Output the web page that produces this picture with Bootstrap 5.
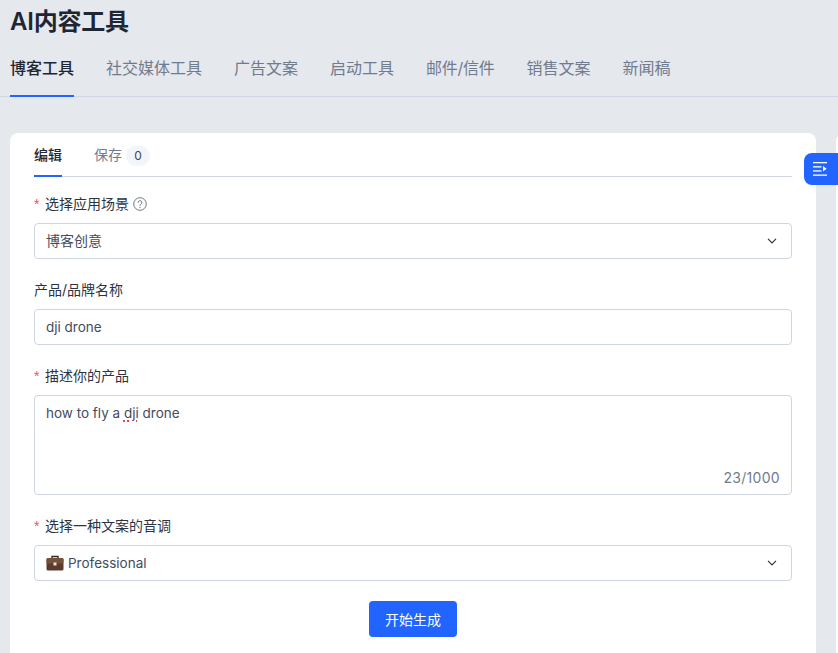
<!DOCTYPE html>
<html lang="zh-CN">
<head>
    <meta charset="UTF-8">
    <title>AI内容工具</title>
    <meta name="viewport" content="width=device-width, initial-scale=1">
    <link href="https://cdn.jsdelivr.net/npm/bootstrap@5.3.2/dist/css/bootstrap.min.css" rel="stylesheet">
    <style>
        html, body { height: 653px; overflow: hidden; }
        body {
            background: #e5e8ed;
            font-family: Inter, "Noto Sans CJK SC", sans-serif;
            color: #1f2633;
            position: relative;
        }
        .page-wrap { padding: 0 0 0 10px; width: 838px; }
        .page-title { font-size: 24px; font-weight: 600; line-height: 32px; margin: 6px 0 0; color: #1f2633; letter-spacing: -.2px; }
        .top-tabs { margin: 15px 0 0 -10px; padding-left: 10px; border-bottom: 1px solid #cfd5e3; gap: 32px; height: 44px; }
        .top-tabs .tab-item { font-size: 16px; line-height: 24px; padding: 3px 0 0; color: #717b8e; height: 44px; border-bottom: 2px solid transparent; }
        .top-tabs .tab-item.on { color: #1f2633; font-weight: 500; border-bottom-color: #2164ff; }
        .top-tabs .tab-slash { letter-spacing: -.25px; }
        .main-row { margin-top: 36px; gap: 20px; }
        .main-card { width: 806px; height: 520px; flex: none; background: #fff; border-radius: 8px 8px 0 0; padding: 8px 24px 0; }
        .side-card { width: 40px; height: 520px; flex: none; background: #fff; border-radius: 8px 0 0 0; }
        .inner-tabs { gap: 32px; border-bottom: 1px solid #cfd5e3; height: 36px; }
        .inner-tabs .tab-item { font-size: 14px; line-height: 22px; padding-top: 3px; height: 36px; color: #717b8e; border-bottom: 2px solid transparent; }
        .inner-tabs .tab-item.on { color: #1f2633; font-weight: 500; border-bottom-color: #2164ff; }
        .count-pill { background: #f2f5f9; color: #3d4656; border-radius: 10px; font-size: 12px; line-height: 20px; width: 24px; text-align: center; margin-left: 4px; display: inline-block; }
        .field-label { font-size: 14px; line-height: 22px; color: #2c3442; margin: 0 0 8px; display: flex; align-items: center; }
        .req { color: #f5505a; margin-right: 5px; width: 6px; font-family: "Liberation Sans", sans-serif; }
        .field { margin-bottom: 20px; }
        .field-box { height: 36px; border: 1px solid #cfd5e3; border-radius: 4px; padding: 0 11px; font-size: 13.5px; color: #434c5c; }
        .area-box { height: 100px; padding-top: 6px; line-height: 22px; position: relative; }
        .area-count { position: absolute; right: 11px; bottom: 5px; font-size: 14px; line-height: 22px; color: #717b8e; letter-spacing: .3px; }
        .typo { text-decoration: underline dotted #f0414b 2px; text-underline-offset: 2px; }
        .cn-val { font-size: 14px; padding-bottom: 2px; }
        .caret-icon { margin-right: 3px; }
        .go-btn { background: #2164ff; border: 0; border-radius: 4px; color: #fff; font-size: 14px; height: 36px; width: 88px; padding: 0; }
        .float-tab { position: absolute; left: 804px; top: 153px; width: 34px; height: 32px; background: #2164ff; border-radius: 8px 0 0 8px; padding-right: 2px; }
    </style>
</head>
<body>
    <div class="page-wrap">
        <h1 class="page-title">AI内容工具</h1>
        <div class="d-flex top-tabs">
            <div class="tab-item on">博客工具</div>
            <div class="tab-item">社交媒体工具</div>
            <div class="tab-item">广告文案</div>
            <div class="tab-item">启动工具</div>
            <div class="tab-item tab-slash">邮件/信件</div>
            <div class="tab-item">销售文案</div>
            <div class="tab-item">新闻稿</div>
        </div>

        <div class="d-flex main-row">
            <div class="main-card">
                <div class="d-flex inner-tabs mb-3">
                    <div class="tab-item on">编辑</div>
                    <div class="tab-item">保存<span class="count-pill">0</span></div>
                </div>

                <div class="field">
                    <div class="field-label"><span class="req">*</span>选择应用场景
                        <svg class="ms-1" width="14" height="14" viewBox="0 0 14 14" fill="none" stroke="#6f7786">
                            <circle cx="7" cy="7" r="6.3"/>
                            <path d="M5.1 5.500a1.900 1.900 0 1 1 2.800 1.700c-.6.3-.9.7-.9 1.300" stroke-linecap="round"/>
                            <circle cx="7" cy="10.400" r=".6" fill="#6f7786" stroke="none"/>
                        </svg>
                    </div>
                    <div class="field-box d-flex align-items-center justify-content-between">
                        <span class="cn-val">博客创意</span>
                        <svg class="caret-icon" width="10" height="6" viewBox="0 0 10 6" fill="none" stroke="#2c3442" stroke-width="1.200"><path d="M1 .8 5 4.800 9 .8"/></svg>
                    </div>
                </div>

                <div class="field">
                    <div class="field-label">产品/品牌名称</div>
                    <div class="field-box d-flex align-items-center">dji drone</div>
                </div>

                <div class="field">
                    <div class="field-label"><span class="req">*</span>描述你的产品</div>
                    <div class="field-box area-box">how to fly a <span class="typo">dji</span> drone
                        <span class="area-count">23/1000</span>
                    </div>
                </div>

                <div class="field">
                    <div class="field-label"><span class="req">*</span>选择一种文案的音调</div>
                    <div class="field-box d-flex align-items-center justify-content-between">
                        <span class="d-flex align-items-center">
                            <svg class="me-1" width="18" height="16" viewBox="0 0 18 16">
                                <path d="M6 3V1.500h6V3" fill="none" stroke="#3c2a22" stroke-width="1.400"/>
                                <rect x="0.5" y="3" width="17" height="12.500" rx="1.500" fill="#5a3c2e"/>
                                <rect x="0.5" y="3" width="17" height="5.500" rx="1.500" fill="#75513c"/>
                                <rect x="7.500" y="7.500" width="3" height="3" fill="#e9e4df"/>
                            </svg>
                            Professional
                        </span>
                        <svg class="caret-icon" width="10" height="6" viewBox="0 0 10 6" fill="none" stroke="#2c3442" stroke-width="1.200"><path d="M1 .8 5 4.800 9 .8"/></svg>
                    </div>
                </div>

                <div class="text-center">
                    <button type="button" class="btn go-btn">开始生成</button>
                </div>
            </div>
            <div class="side-card"></div>
        </div>
    </div>

    <div class="float-tab d-flex align-items-center justify-content-center">
        <svg width="14" height="14" viewBox="0 0 14 14" fill="#fff">
            <rect x="0" y="0" width="14" height="1.300"/>
            <rect x="0" y="4.200" width="8.500" height="1.300"/>
            <rect x="0" y="8.300" width="8.500" height="1.300"/>
            <rect x="0" y="12.500" width="14" height="1.300"/>
            <path d="M10 4l3.700 2.800L10 9.600z"/>
        </svg>
    </div>
</body>
</html>
